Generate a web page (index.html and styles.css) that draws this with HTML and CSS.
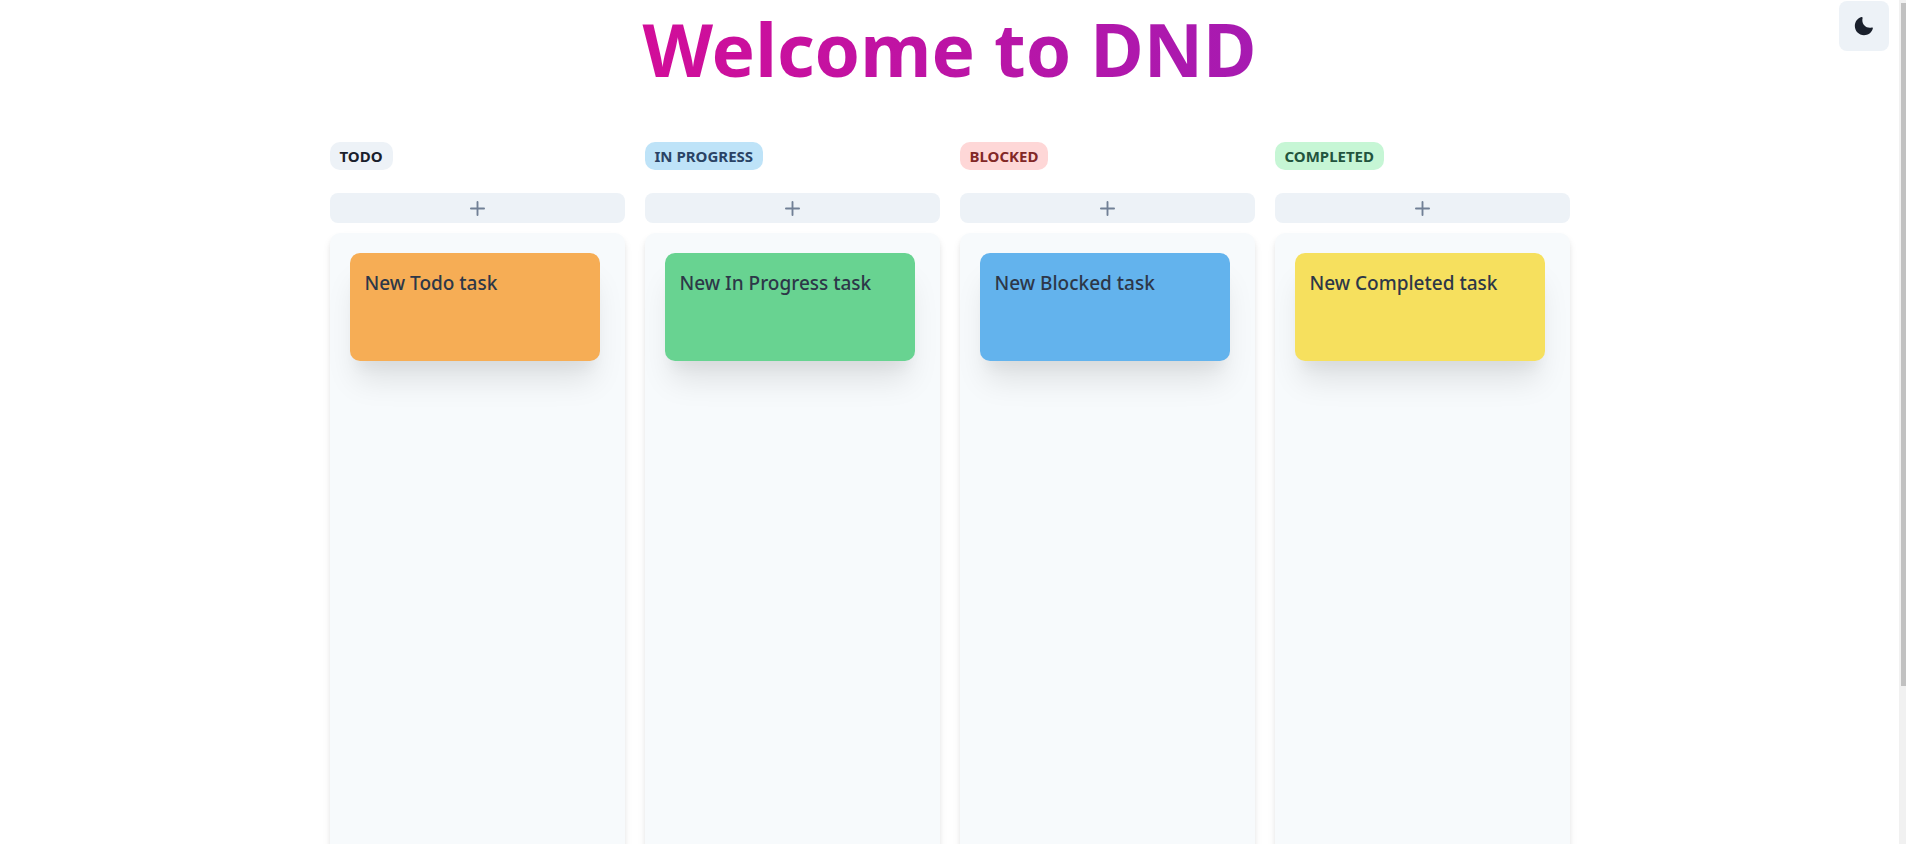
FILE: index.html
```
<!DOCTYPE html>
<html lang="en">
<head>
<meta charset="utf-8">
<meta name="viewport" content="width=device-width, initial-scale=1">
<title>Welcome to DND</title>
<link rel="stylesheet" href="styles.css">
</head>
<body>
<svg class="sprite" aria-hidden="true">
  <symbol id="plus" viewBox="0 0 24 24"><path fill="currentColor" d="M0 12a1.5 1.5 0 0 0 1.5 1.5h8.75a.25.25 0 0 1 .25.25v8.75a1.5 1.5 0 1 0 3 0v-8.75a.25.25 0 0 1 .25-.25h8.75a1.5 1.5 0 0 0 0-3h-8.75a.25.25 0 0 1-.25-.25V1.5a1.5 1.5 0 0 0-3 0v8.75a.25.25 0 0 1-.25.25H1.5A1.5 1.5 0 0 0 0 12z"/></symbol>
</svg>
<div class="page">
  <h1 class="title">Welcome to DND</h1>
  <button class="theme-toggle" type="button" aria-label="Toggle dark mode">
    <svg class="moon" viewBox="0 0 24 24" aria-hidden="true"><path fill="currentColor" d="M21.4,13.7C20.6,13.9,19.8,14,19,14c-5,0-9-4-9-9c0-0.8,0.1-1.6,0.3-2.4c0.1-0.3,0-0.7-0.3-1 c-0.3-0.3-0.6-0.4-1-0.3C4.3,2.7,1,7.1,1,12c0,6.1,4.9,11,11,11c4.9,0,9.3-3.3,10.6-8.1c0.1-0.3,0-0.7-0.3-1 C22.1,13.7,21.7,13.6,21.4,13.7z"/></svg>
  </button>
  <main class="board">
    <section class="column">
      <h2 class="badge badge-todo">Todo</h2>
      <button class="add" type="button" aria-label="Add todo task"><svg class="plus"><use href="#plus"/></svg></button>
      <div class="list"><article class="card card-orange">New Todo task</article></div>
    </section>
    <section class="column">
      <h2 class="badge badge-progress">In Progress</h2>
      <button class="add" type="button" aria-label="Add in progress task"><svg class="plus"><use href="#plus"/></svg></button>
      <div class="list"><article class="card card-green">New In Progress task</article></div>
    </section>
    <section class="column">
      <h2 class="badge badge-blocked">Blocked</h2>
      <button class="add" type="button" aria-label="Add blocked task"><svg class="plus"><use href="#plus"/></svg></button>
      <div class="list"><article class="card card-blue">New Blocked task</article></div>
    </section>
    <section class="column">
      <h2 class="badge badge-completed">Completed</h2>
      <button class="add" type="button" aria-label="Add completed task"><svg class="plus"><use href="#plus"/></svg></button>
      <div class="list"><article class="card card-yellow">New Completed task</article></div>
    </section>
  </main>
</div>
<div class="scrollbar" aria-hidden="true"><div class="thumb"></div></div>
</body>
</html>
```
FILE: styles.css
```
* { box-sizing: border-box; }

html { scrollbar-width: none; }

body {
  margin: 0;
  padding-right: 7px;
  background: #fff;
  color: #1a202c;
  font-family: "Noto Sans", "Open Sans", sans-serif;
}

.sprite { display: none; }

.page { padding-bottom: 60px; }

.title {
  margin: 0;
  line-height: 98px;
  font-size: 73px;
  font-weight: 700;
  text-align: center;
  color: transparent;
  background: linear-gradient(to left, #7928ca, #ff0080);
  background-clip: text;
  -webkit-background-clip: text;
}

button { border: 0; padding: 0; cursor: pointer; }

.theme-toggle {
  position: absolute;
  top: 1px;
  right: 17px;
  display: flex;
  align-items: center;
  justify-content: center;
  width: 50px;
  height: 50px;
  border-radius: 8px;
  background: #edf2f7;
  color: #1a202c;
}

.moon { width: 20px; height: 20px; }

.board {
  display: grid;
  grid-template-columns: repeat(4, minmax(0, 1fr));
  gap: 20px;
  max-width: 1280px;
  margin: 0 auto;
  padding: 44px 20px 0;
}

.column {
  display: flex;
  flex-direction: column;
}

.badge {
  align-self: flex-start;
  margin: 0 0 23px;
  padding: 0 10px;
  border-radius: 10px;
  font-size: 15px;
  line-height: 28px;
  font-weight: 700;
  text-transform: uppercase;
}

.badge-todo { background: #edf2f7; color: #1a202c; }
.badge-progress { background: #bee3f8; color: #2a4365; }
.badge-blocked { background: #fed7d7; color: #822727; }
.badge-completed { background: #c6f6d5; color: #22543d; }

.add {
  display: flex;
  align-items: center;
  justify-content: center;
  height: 30px;
  margin-bottom: 10px;
  border-radius: 8px;
  background: #edf2f7;
  color: #718096;
}

.plus { width: 15px; height: 15px; }

.list {
  height: 750px;
  padding: 20px 25px 20px 20px;
  border-radius: 10px;
  background: #f7fafc;
  box-shadow: 0 5px 8px -1px rgba(0, 0, 0, .1), 0 3px 5px -1px rgba(0, 0, 0, .06);
}

.card {
  height: 108px;
  padding: 15px;
  border-radius: 10px;
  font-size: 19px;
  line-height: 30px;
  font-weight: 500;
  color: #2d3748;
  box-shadow: 0 25px 31px -6px rgba(0, 0, 0, .1), 0 13px 13px -6px rgba(0, 0, 0, .04);
}

.card-orange { background: #f6ad55; }
.card-green { background: #68d391; }
.card-blue { background: #63b3ed; }
.card-yellow { background: #f6e05e; }

.scrollbar {
  position: fixed;
  top: 0;
  right: 0;
  bottom: 0;
  width: 7px;
  padding: 3px 0 0 2px;
  background: #f1f1f1;
}

.thumb { height: calc(81% + 2px); background: #c1c1c1; }
```
